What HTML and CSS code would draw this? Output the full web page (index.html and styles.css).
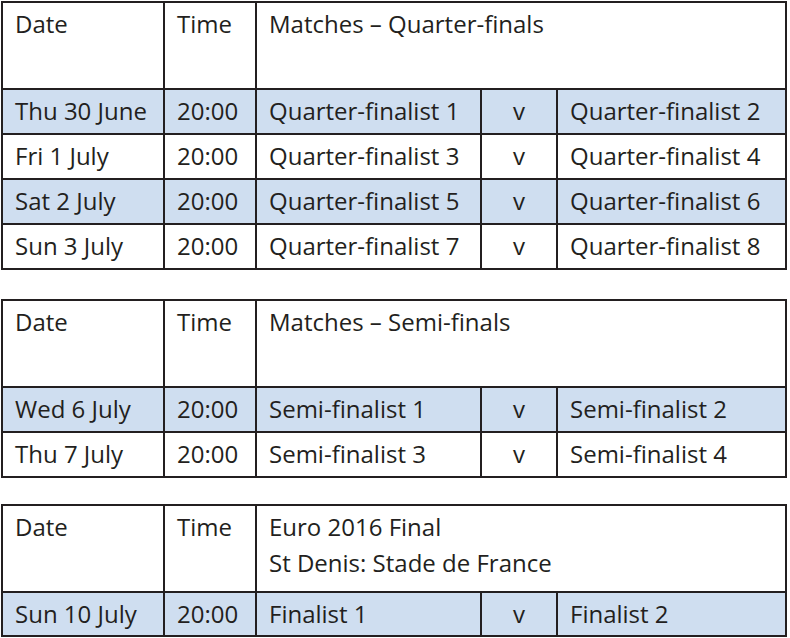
FILE: index.html
```html
<!DOCTYPE html>
<html lang="en">
<head>
<meta charset="utf-8">
<title>Euro 2016 knockout schedule</title>
<link rel="stylesheet" href="styles.css">
</head>
<body>
<main class="page">
  <section class="fixtures">
    <div class="cell head">Date</div>
    <div class="cell head">Time</div>
    <div class="cell head span3">Matches – Quarter-finals</div>

    <div class="cell blue">Thu 30 June</div>
    <div class="cell blue">20:00</div>
    <div class="cell blue">Quarter-finalist 1</div>
    <div class="cell blue vs">v</div>
    <div class="cell blue">Quarter-finalist 2</div>

    <div class="cell">Fri 1 July</div>
    <div class="cell">20:00</div>
    <div class="cell">Quarter-finalist 3</div>
    <div class="cell vs">v</div>
    <div class="cell">Quarter-finalist 4</div>

    <div class="cell blue">Sat 2 July</div>
    <div class="cell blue">20:00</div>
    <div class="cell blue">Quarter-finalist 5</div>
    <div class="cell blue vs">v</div>
    <div class="cell blue">Quarter-finalist 6</div>

    <div class="cell">Sun 3 July</div>
    <div class="cell">20:00</div>
    <div class="cell">Quarter-finalist 7</div>
    <div class="cell vs">v</div>
    <div class="cell">Quarter-finalist 8</div>
  </section>

  <section class="fixtures fixtures--sf">
    <div class="cell head">Date</div>
    <div class="cell head">Time</div>
    <div class="cell head span3">Matches – Semi-finals</div>

    <div class="cell blue">Wed 6 July</div>
    <div class="cell blue">20:00</div>
    <div class="cell blue">Semi-finalist 1</div>
    <div class="cell blue vs">v</div>
    <div class="cell blue">Semi-finalist 2</div>

    <div class="cell">Thu 7 July</div>
    <div class="cell">20:00</div>
    <div class="cell">Semi-finalist 3</div>
    <div class="cell vs">v</div>
    <div class="cell">Semi-finalist 4</div>
  </section>

  <section class="fixtures fixtures--final">
    <div class="cell head">Date</div>
    <div class="cell head">Time</div>
    <div class="cell head span3">Euro 2016 Final<br>St Denis: Stade de France</div>

    <div class="cell blue">Sun 10 July</div>
    <div class="cell blue">20:00</div>
    <div class="cell blue">Finalist 1</div>
    <div class="cell blue vs">v</div>
    <div class="cell blue">Finalist 2</div>
  </section>
</main>
</body>
</html>
```

FILE: styles.css
```css
html, body {
  margin: 0;
  padding: 0;
  background: #ffffff;
}

.page {
  padding: 1px 0 0 1px;
  display: flex;
  flex-direction: column;
  font-family: "Open Sans", "Liberation Sans", sans-serif;
  font-size: 24px;
  color: #231f20;
}

.fixtures {
  display: grid;
  grid-template-columns: 162px 92px 225px 76px 229px;
  grid-template-rows: 87px;
  grid-auto-rows: 45px;
  width: 784px;
  border-top: 2px solid #231f20;
  border-left: 2px solid #231f20;
}

.fixtures--sf {
  margin-top: 29px;
}

.fixtures--final {
  margin-top: 26px;
  grid-auto-rows: 44px;
}

.cell {
  box-sizing: border-box;
  border-right: 2px solid #231f20;
  border-bottom: 2px solid #231f20;
  padding: 3px 0 0 12px;
  line-height: 36px;
  white-space: nowrap;
}

.head {
  padding-top: 3px;
}

.span3 {
  grid-column: span 3;
}

.blue {
  background: #cfdef0;
}

.vs {
  padding-left: 0;
  text-align: center;
}
```
